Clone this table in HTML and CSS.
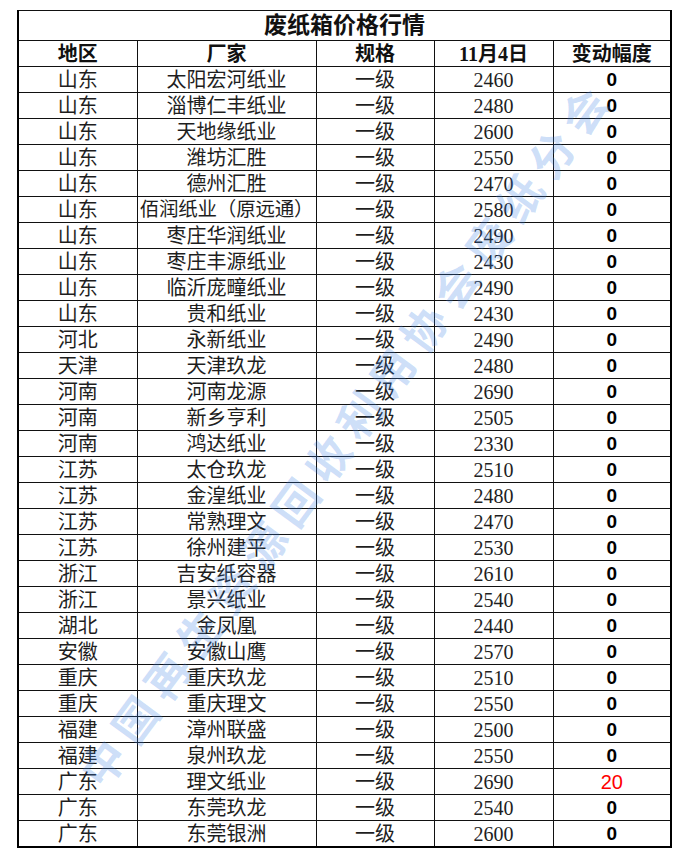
FILE: index.html
```html
<!DOCTYPE html>
<html lang="zh-CN">
<head>
<meta charset="utf-8">
<title>废纸箱价格行情</title>
<link rel="stylesheet" href="styles.css">
</head>
<body>
<div class="sheet">
<table class="price">
<colgroup>
<col class="c-region"><col class="c-maker"><col class="c-grade"><col class="c-price"><col class="c-change">
</colgroup>
<tr class="title-row"><th colspan="5">废纸箱价格行情</th></tr>
<tr class="head-row"><th>地区</th><th>厂家</th><th>规格</th><th>11月4日</th><th>变动幅度</th></tr>
<tr><td>山东</td><td>太阳宏河纸业</td><td>一级</td><td class="num">2460</td><td class="chg">0</td></tr>
<tr><td>山东</td><td>淄博仁丰纸业</td><td>一级</td><td class="num">2480</td><td class="chg">0</td></tr>
<tr><td>山东</td><td>天地缘纸业</td><td>一级</td><td class="num">2600</td><td class="chg">0</td></tr>
<tr><td>山东</td><td>潍坊汇胜</td><td>一级</td><td class="num">2550</td><td class="chg">0</td></tr>
<tr><td>山东</td><td>德州汇胜</td><td>一级</td><td class="num">2470</td><td class="chg">0</td></tr>
<tr><td>山东</td><td class="tight">佰润纸业（原远通）</td><td>一级</td><td class="num">2580</td><td class="chg">0</td></tr>
<tr><td>山东</td><td>枣庄华润纸业</td><td>一级</td><td class="num">2490</td><td class="chg">0</td></tr>
<tr><td>山东</td><td>枣庄丰源纸业</td><td>一级</td><td class="num">2430</td><td class="chg">0</td></tr>
<tr><td>山东</td><td>临沂庞疃纸业</td><td>一级</td><td class="num">2490</td><td class="chg">0</td></tr>
<tr><td>山东</td><td>贵和纸业</td><td>一级</td><td class="num">2430</td><td class="chg">0</td></tr>
<tr><td>河北</td><td>永新纸业</td><td>一级</td><td class="num">2490</td><td class="chg">0</td></tr>
<tr><td>天津</td><td>天津玖龙</td><td>一级</td><td class="num">2480</td><td class="chg">0</td></tr>
<tr><td>河南</td><td>河南龙源</td><td>一级</td><td class="num">2690</td><td class="chg">0</td></tr>
<tr><td>河南</td><td>新乡亨利</td><td>一级</td><td class="num">2505</td><td class="chg">0</td></tr>
<tr><td>河南</td><td>鸿达纸业</td><td>一级</td><td class="num">2330</td><td class="chg">0</td></tr>
<tr><td>江苏</td><td>太仓玖龙</td><td>一级</td><td class="num">2510</td><td class="chg">0</td></tr>
<tr><td>江苏</td><td>金湟纸业</td><td>一级</td><td class="num">2480</td><td class="chg">0</td></tr>
<tr><td>江苏</td><td>常熟理文</td><td>一级</td><td class="num">2470</td><td class="chg">0</td></tr>
<tr><td>江苏</td><td>徐州建平</td><td>一级</td><td class="num">2530</td><td class="chg">0</td></tr>
<tr><td>浙江</td><td>吉安纸容器</td><td>一级</td><td class="num">2610</td><td class="chg">0</td></tr>
<tr><td>浙江</td><td>景兴纸业</td><td>一级</td><td class="num">2540</td><td class="chg">0</td></tr>
<tr><td>湖北</td><td>金凤凰</td><td>一级</td><td class="num">2440</td><td class="chg">0</td></tr>
<tr><td>安徽</td><td>安徽山鹰</td><td>一级</td><td class="num">2570</td><td class="chg">0</td></tr>
<tr><td>重庆</td><td>重庆玖龙</td><td>一级</td><td class="num">2510</td><td class="chg">0</td></tr>
<tr><td>重庆</td><td>重庆理文</td><td>一级</td><td class="num">2550</td><td class="chg">0</td></tr>
<tr><td>福建</td><td>漳州联盛</td><td>一级</td><td class="num">2500</td><td class="chg">0</td></tr>
<tr><td>福建</td><td>泉州玖龙</td><td>一级</td><td class="num">2550</td><td class="chg">0</td></tr>
<tr><td>广东</td><td>理文纸业</td><td>一级</td><td class="num">2690</td><td class="chg up">20</td></tr>
<tr><td>广东</td><td>东莞玖龙</td><td>一级</td><td class="num">2540</td><td class="chg">0</td></tr>
<tr><td>广东</td><td>东莞银洲</td><td>一级</td><td class="num">2600</td><td class="chg">0</td></tr>
</table>
<div class="watermark">中国再生资源回收利用协会废纸分会</div>
</div>
</body>
</html>
```

FILE: styles.css
```css
html, body {
  margin: 0;
  padding: 0;
  background: #ffffff;
}
.sheet {
  position: relative;
  width: 685px;
  height: 856px;
  overflow: hidden;
  padding-top: 10px;
  box-sizing: border-box;
}
.price {
  margin-left: 17px;
  width: 653px;
  border-collapse: collapse;
  table-layout: fixed;
  border-top: 1px solid #000;
  border-left: 2px solid #000;
  border-right: 2px solid #000;
  border-bottom: 2px solid #000;
  font-family: "Liberation Serif", "Noto Sans CJK SC", serif;
  font-size: 20px;
  color: #1e1e1e;
}
.c-region { width: 119px; }
.c-maker { width: 179px; }
.c-grade { width: 118px; }
.c-price { width: 119px; }
.c-change { width: 118px; }
.price td, .price th {
  border: 1px solid #111;
  padding: 1px 0 0 0;
  height: 24px;
  line-height: 24px;
  text-align: center;
  white-space: nowrap;
  overflow: visible;
  vertical-align: middle;
}
.title-row th {
  height: 28px;
  font-size: 23px;
  font-weight: bold;
  color: #111;
  line-height: 28px;
}
.head-row th {
  font-weight: bold;
  color: #111;
}
.price td.tight {
  font-size: 19.5px;
  letter-spacing: -0.2px;
}
.price td.chg {
  font-family: "Liberation Sans", "Noto Sans CJK SC", sans-serif;
  font-weight: bold;
  font-size: 19px;
  color: #000;
}
.price td.chg.up {
  color: #ff0000;
  font-weight: normal;
  font-size: 20px;
}
.watermark {
  position: absolute;
  left: 345px;
  top: 432px;
  transform: translate(-50%, -50%) rotate(-53.6deg);
  white-space: nowrap;
  font-family: "Noto Sans CJK SC", sans-serif;
  font-weight: bold;
  font-size: 44px;
  letter-spacing: 10px;
  color: rgba(60, 130, 230, 0.26);
  pointer-events: none;
}
```
